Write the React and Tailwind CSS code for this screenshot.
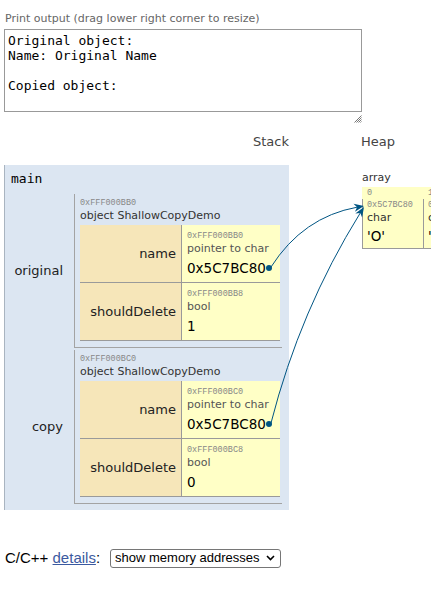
const addrCls = "font-['Liberation_Mono',monospace] text-[8.5px] leading-[12px] text-[#888]";

function Field({ name, addr, type, value }) {
  return (
    <div className="flex border-b border-[#9a9a9a]">
      <div className="w-[102px] h-[57px] bg-[#f6e6b9] border-r border-[#9a9a9a] flex items-center justify-end pr-[5px] text-[13px] text-[#222]">
        {name}
      </div>
      <div className="w-[98px] h-[57px] bg-[#ffffc6] pl-[5px] pt-[5px]">
        <div className={addrCls}>{addr}</div>
        <div className="text-[11px] leading-[14px] text-[#555]">{type}</div>
        <div className="mt-[2px] text-[13.5px] leading-[20px] text-black">{value}</div>
      </div>
    </div>
  );
}

function StructObj({ addr, fields }) {
  return (
    <div className="w-[208px] border-l border-b border-[#a3a3a3] pl-[5px] pr-[2px] pt-[3px] pb-[6px]">
      <div className={addrCls}>{addr}</div>
      <div className="text-[11px] leading-[14px] text-[#333] mb-[2px]">object ShallowCopyDemo</div>
      {fields.map((f) => (
        <Field key={f.addr} {...f} />
      ))}
    </div>
  );
}

function VarRow({ label, children }) {
  return (
    <div className="flex items-center">
      <div className="w-[69px] text-right pr-[11px] text-[13px] text-[#222]">{label}</div>
      {children}
    </div>
  );
}

function HeapCell({ addr, value }) {
  return (
    <div className="w-[61px] shrink-0 border-l border-b border-[#9a9a9a] pl-[4px] pb-[2px]">
      <div className={addrCls}>{addr}</div>
      <div className="text-[11px] leading-[14px] text-[#333]">char</div>
      <div className="mt-[1px] text-[13.5px] leading-[20px] text-black">{value}</div>
    </div>
  );
}

export default function App() {
  return (
    <div className="relative w-[431px] h-[596px] overflow-hidden bg-white pl-[4px] pt-[12px] font-['DejaVu_Sans',sans-serif] text-[#333]">
      <div className="pl-[1px] text-[11px] leading-[14px] text-[#666]">Print output (drag lower right corner to resize)</div>
      <div className="mt-[3px] w-[358px] h-[83px] border border-[#999] px-[3px] pt-[3px] font-['DejaVu_Sans_Mono',monospace] text-[13px] leading-[15px] text-black whitespace-pre">
        {"Original object:\nName: Original Name\n\nCopied object:"}
      </div>
      <div className="w-[358px] h-[20px] flex justify-end items-start pt-[3px]">
        <svg width="8" height="8" viewBox="0 0 8 8">
          <path d="M7.5 0.5 L0.5 7.5 M7.5 2.5 L2.5 7.5 M7.5 4.5 L4.5 7.5 M7.5 6.5 L6.5 7.5" stroke="#555" strokeWidth="0.8" />
        </svg>
      </div>

      <div className="flex items-start">
        <div className="w-[285px] shrink-0">
          <div className="h-[20px] leading-[20px] text-right text-[13px] text-[#444]">Stack</div>
          <div className="mt-[13px] bg-[#dce6f2] border-l border-[#a9b4c0] pt-[5px] pb-[6px]">
            <div className="pl-[6px] font-['DejaVu_Sans_Mono',monospace] text-[13px] leading-[18px] text-black">main</div>
            <div className="mt-[6px] flex flex-col gap-[2px]">
              <VarRow label="original">
                <StructObj
                  addr="0xFFF000BB0"
                  fields={[
                    { name: "name", addr: "0xFFF000BB0", type: "pointer to char", value: "0x5C7BC80" },
                    { name: "shouldDelete", addr: "0xFFF000BB8", type: "bool", value: "1" },
                  ]}
                />
              </VarRow>
              <VarRow label="copy">
                <StructObj
                  addr="0xFFF000BC0"
                  fields={[
                    { name: "name", addr: "0xFFF000BC0", type: "pointer to char", value: "0x5C7BC80" },
                    { name: "shouldDelete", addr: "0xFFF000BC8", type: "bool", value: "0" },
                  ]}
                />
              </VarRow>
            </div>
          </div>
        </div>

        <div className="ml-[72px] shrink-0">
          <div className="h-[20px] leading-[20px] text-[13px] text-[#444]">Heap</div>
          <div className="mt-[19px] pl-[1px] text-[11px] leading-[14px] text-[#333]">array</div>
          <div className="mt-[2px] ml-[1px] w-[122px] bg-[#ffffc6]">
            <div className="flex h-[12px]">
              <div className={"w-[61px] shrink-0 pl-[5px] " + addrCls}>0</div>
              <div className={"w-[61px] shrink-0 pl-[5px] " + addrCls}>1</div>
            </div>
            <div className="flex">
              <HeapCell addr="0x5C7BC80" value="'O'" />
              <HeapCell addr="0x5C7BC81" value="'r'" />
            </div>
          </div>
        </div>
      </div>

      <div className="mt-[38px] h-[20px] flex items-center pl-[1px] font-['Liberation_Sans',Arial,sans-serif] text-[15px] text-black">
        <span>
          C/C++ <a href="#" className="text-[#3b5aa0] underline">details</a>:
        </span>
        <div className="ml-[10px] w-[171px] h-[19px] border border-[#767676] rounded-[3px] flex items-center justify-between pl-[4px] pr-[5px] text-[13px]">
          <span>show memory addresses</span>
          <svg width="9" height="6" viewBox="0 0 9 6">
            <path d="M1 1 L4.5 4.5 L8 1" fill="none" stroke="#000" strokeWidth="1.6" />
          </svg>
        </div>
      </div>

      <svg className="absolute left-0 top-0 pointer-events-none" width="431" height="596">
        <circle cx="269" cy="268" r="3" fill="#005583" />
        <circle cx="269" cy="424" r="3" fill="#005583" />
        <path d="M271 267 Q303 217 357.1 207.2" fill="none" stroke="#005583" strokeWidth="1" />
        <polygon points="364,206 354.9,211.7 357.1,207.2 353.5,203.8" fill="#005583" />
        <path d="M271 423 Q300 310 360.3 212.9" fill="none" stroke="#005583" strokeWidth="1" />
        <polygon points="364,207 362.1,217.6 360.3,212.9 355.3,213.4" fill="#005583" />
      </svg>
    </div>
  );
}
